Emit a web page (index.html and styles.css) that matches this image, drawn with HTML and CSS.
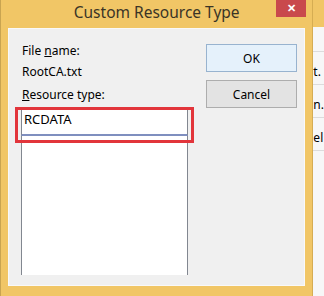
FILE: index.html
```html
<!DOCTYPE html>
<html lang="en">
<head>
  <meta charset="UTF-8" />
  <title>Custom Resource Type</title>
  <link rel="stylesheet" href="styles.css">
</head>
<body>
  <div class="desk">
    <div class="edge-left"></div>

    <div class="dialog">
      <div class="titlebar">
        <span class="title">Custom Resource Type</span>
        <button class="close">&#x2715;</button>
      </div>

      <div class="client">
        <div class="fields">
          <div class="label">File <u>n</u>ame:</div>
          <div class="label value">RootCA.txt</div>
          <div class="label type"><u>R</u>esource type:</div>
          <div class="combo">
            <div class="edit">RCDATA</div>
            <div class="list"></div>
          </div>
        </div>

        <div class="buttons">
          <button class="btn default">OK</button>
          <button class="btn">Cancel</button>
        </div>

        <!-- highlight drawn over the type box -->
        <div class="mark"></div>
      </div>
    </div>

    <div class="behind">
      <div class="behind-title"></div>
      <div class="row first"></div>
      <div class="row">t.</div>
      <div class="row">n.</div>
      <div class="row">el</div>
    </div>
  </div>
</body>
</html>
```

FILE: styles.css
```css
html, body {
  margin: 0;
}
body {
  width: 324px;
  height: 296px;
  overflow: hidden;
  font-family: "Noto Sans", "Open Sans", sans-serif;
  font-size: 12px;
  color: #000;
  background: #f0f0f0;
}
.desk {
  display: flex;
  height: 296px;
}
.edge-left {
  width: 1px;
  background: #c9a451;
}
.dialog {
  width: 314px;
  box-sizing: border-box;
  padding: 0 7px 10px 7px;
  background: #f1c666;
  display: flex;
  flex-direction: column;
}
.titlebar {
  height: 28px;
  position: relative;
  display: flex;
  justify-content: center;
}
.title {
  font-size: 15.5px;
  line-height: 20px;
  padding-top: 2px;
  color: #3a3426;
}
.close {
  position: absolute;
  top: 0;
  right: -1px;
  width: 30px;
  height: 17px;
  padding: 0;
  border: none;
  background: #c9494c;
  color: #fff;
  font-size: 11px;
  font-weight: bold;
  line-height: 17px;
}
.client {
  flex: 1;
  position: relative;
  display: flex;
  background: #f0f0f0;
  border: 1px solid #f9f9f9;
}
.fields {
  width: 167px;
  margin-left: 12px;
  padding-top: 14px;
}
.label {
  line-height: 16px;
  padding-left: 1px;
  white-space: nowrap;
}
.value {
  margin-top: 5px;
}
.type {
  margin-top: 7px;
}
.combo {
  margin-top: 7px;
}
.edit {
  height: 23px;
  box-sizing: content-box;
  padding: 1px 0 0 2px;
  line-height: 16px;
  background: #fff;
  border-left: 1px solid #828790;
  border-right: 1px solid #828790;
  border-bottom: 2px solid #7f8fbf;
  font-size: 13px;
}
.list {
  height: 139px;
  background: #fff;
  border-left: 1px solid #828790;
  border-right: 1px solid #828790;
}
.buttons {
  margin-left: 18px;
  padding-top: 15px;
  display: flex;
  flex-direction: column;
  gap: 8px;
}
.btn {
  width: 91px;
  height: 28px;
  padding: 0;
  font-family: "Noto Sans", "Open Sans", sans-serif;
  font-size: 12px;
  color: #000;
  background: #e3e3e3;
  border: 1px solid #adadad;
}
.btn.default {
  background: #e5f1fb;
  border-color: #98b3cf;
}
.mark {
  position: absolute;
  left: 6px;
  top: 78px;
  width: 179px;
  height: 36px;
  box-sizing: border-box;
  border: 3px solid #e2353b;
}
.behind {
  flex: 1;
  background: #f7f7f7;
  border-left: 1px solid #d6ad52;
}
.behind-title {
  height: 27px;
  background: #f1c666;
}
.row {
  height: 33px;
  box-sizing: border-box;
  border-bottom: 1px solid #dcdcdc;
  line-height: 16px;
  padding-top: 12px;
  white-space: nowrap;
  overflow: hidden;
}
.row.first {
  height: 25px;
  padding: 0;
}
```
